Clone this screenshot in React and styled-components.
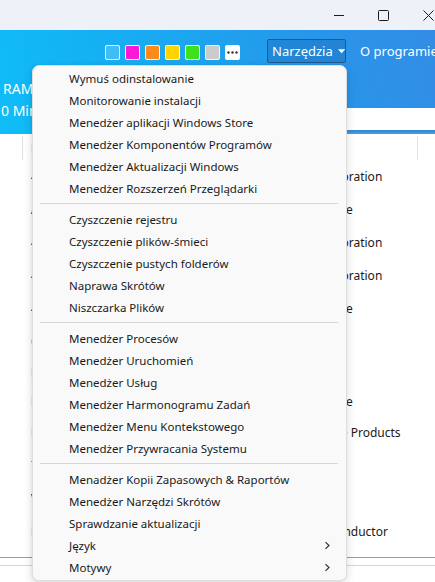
import React from "react";
import styled, { createGlobalStyle } from "styled-components";

const Global = createGlobalStyle`
  html, body { margin: 0; padding: 0; overflow: hidden; background: #ffffff; }
  body { font-family: "Noto Sans", "Open Sans", sans-serif; }
  * { box-sizing: border-box; }
`;

const FONT = `"Noto Sans", "Open Sans", sans-serif`;

const Frame = styled.div`
  position: relative;
  width: 451px;
  height: 582px;
  overflow: hidden;
  display: flex;
  flex-direction: column;
  background: #fff;
  font-family: ${FONT};
`;

const TitleBar = styled.div`
  height: 30px;
  flex: none;
  background: #eef1f8;
  display: flex;
  justify-content: flex-end;
`;

const Caption = styled.div`
  width: 45px;
  height: 30px;
  display: flex;
  align-items: center;
  justify-content: center;
  color: #1b1b1b;
`;

const Header = styled.div`
  flex: none;
  background: linear-gradient(75deg, #0fbdf7 0%, #18abf1 35%, #2796ea 70%, #348be4 100%);
  display: flex;
  flex-direction: column;
`;

const Toolbar = styled.div`
  height: 42px;
  display: flex;
  align-items: center;
  padding-left: 105px;
`;

const Swatches = styled.div`
  display: flex;
  gap: 5px;
  padding-top: 2px;
`;

const Swatch = styled.div`
  width: 15px;
  height: 15px;
  border-radius: 2px;
  border: 1.5px solid rgba(255, 255, 255, 0.9);
  background: ${(p) => p.$color};
  display: flex;
  align-items: center;
  justify-content: center;
`;

const MenuButton = styled.div`
  margin-left: 27px;
  width: 79px;
  height: 24px;
  border: 1px solid #1e5a8f;
  border-radius: 2px;
  background: rgba(25, 90, 160, 0.28);
  color: #fff;
  font-size: 13px;
  display: flex;
  align-items: center;
  padding-left: 4px;
  gap: 5px;
`;

const NavLink = styled.div`
  margin-left: 14px;
  color: #fff;
  font-size: 13px;
  white-space: nowrap;
`;

const InfoRow = styled.div`
  height: 62px;
  display: grid;
  grid-template-columns: 260px 1fr;
`;

const Stats = styled.div`
  color: #fff;
  font-size: 14px;
  line-height: 22px;
  padding: 6px 0 0 1px;
  white-space: nowrap;
`;

const StatLine = styled.div`
  padding-left: ${(p) => p.$indent || 0}px;
`;

const InfoRight = styled.div`
  display: flex;
  flex-direction: column;
`;

const BlueFill = styled.div`
  height: 36px;
`;

const WhiteBand = styled.div`
  height: 22px;
  background: #fff;
`;

const AccentLine = styled.div`
  height: 4px;
  background: linear-gradient(#2f86d2, #4a9ee0);
`;

const Table = styled.div`
  flex: none;
  display: flex;
  flex-direction: column;
  font-size: 12px;
  color: #1a1a1a;
`;

const Cols = `22px 230px 165px 1fr`;

const HeadRow = styled.div`
  height: 26px;
  display: grid;
  grid-template-columns: ${Cols};
  align-items: center;
`;

const HeadCell = styled.div`
  height: 24px;
  margin-top: 2px;
  display: flex;
  align-items: center;
  padding-left: 8px;
  border-left: ${(p) => (p.$divider ? "1px solid #e1e1e1" : "none")};
  color: ${(p) => p.$color || "#333"};
  white-space: nowrap;
  overflow: hidden;
`;

const Body = styled.div`
  height: 398px;
  overflow: hidden;
  border-bottom: 1px solid #9c9c9c;
`;

const Row = styled.div`
  height: ${(p) => p.$h}px;
  display: grid;
  grid-template-columns: ${Cols};
  align-items: center;
`;

const Cell = styled.div`
  padding-left: ${(p) => p.$pad ?? 6}px;
  white-space: nowrap;
  overflow: hidden;
`;

const StatusBar = styled.div`
  margin-top: 7px;
  border-top: 1px solid #d6d6d6;
  flex: 1;
`;

const Menu = styled.div`
  position: absolute;
  left: 32px;
  top: 65px;
  width: 315px;
  height: 516px;
  background: #f9f9f9;
  border: 1px solid #dedede;
  border-radius: 7px;
  box-shadow: 0 3px 10px rgba(0, 0, 0, 0.14), -1px 0 3px rgba(0, 0, 0, 0.05);
  padding-top: 1px;
  font-size: 11.5px;
  color: #1a1a1a;
`;

const Item = styled.div`
  height: 22px;
  display: flex;
  align-items: center;
  justify-content: space-between;
  padding: 0 15px 0 36px;
  white-space: nowrap;
`;

const Separator = styled.div`
  height: 9px;
  display: flex;
  align-items: center;
  padding: 0 8px 0 7px;
  &::after {
    content: "";
    flex: 1;
    height: 1px;
    background: #d6d6d6;
  }
`;

const Chevron = () => (
  <svg width="8" height="9" viewBox="0 0 8 9">
    <path d="M2.5 1.2 L6 4.5 L2.5 7.8" fill="none" stroke="#2a2a2a" strokeWidth="1.1" />
  </svg>
);

const menuGroups = [
  [
    "Wymuś odinstalowanie",
    "Monitorowanie instalacji",
    "Menedżer aplikacji Windows Store",
    "Menedżer Komponentów Programów",
    "Menedżer Aktualizacji Windows",
    "Menedżer Rozszerzeń Przeglądarki",
  ],
  [
    "Czyszczenie rejestru",
    "Czyszczenie plików-śmieci",
    "Czyszczenie pustych folderów",
    "Naprawa Skrótów",
    "Niszczarka Plików",
  ],
  [
    "Menedżer Procesów",
    "Menedżer Uruchomień",
    "Menedżer Usług",
    "Menedżer Harmonogramu Zadań",
    "Menedżer Menu Kontekstowego",
    "Menedżer Przywracania Systemu",
  ],
  [
    "Menadżer Kopii Zapasowych & Raportów",
    "Menedżer Narzędzi Skrótów",
    "Sprawdzanie aktualizacji",
    { label: "Język", sub: true },
    { label: "Motywy", sub: true },
  ],
];

const rows = [
  { h: 33, name: "4K Video Downloader", pub: "Microsoft Corporation" },
  { h: 33, name: "Adobe Acrobat Reader", pub: "Acronis Software" },
  { h: 33, name: "4K Stogram", pub: "Microsoft Corporation" },
  { h: 33, name: "4K YouTube to MP3", pub: "Microsoft Corporation" },
  { h: 33, name: "4K Slideshow Maker", pub: "Acronis Software" },
  { h: 33, name: "Google Chrome", pub: "Google LLC" },
  { h: 29, name: "Mozilla Firefox", pub: "Mozilla" },
  { h: 29, name: "Notepad++", pub: "Acronis Software" },
  { h: 33, name: "Microsoft Office", pub: "Microsoft Office Products" },
  { h: 33, name: "7-Zip", pub: "Igor Pavlov" },
  { h: 33, name: "VLC media player", pub: "VideoLAN" },
  { h: 33, name: "Realtek Audio Driver", pub: "Realtek Semiconductor" },
  { h: 33, name: "Steam", pub: "Valve" },
];

const swatchColors = ["#3fbdf4", "#ff17d8", "#ff8a1c", "#ffd400", "#3fe01e", "#cbcbcb"];

export default function App() {
  return (
    <>
      <Global />
      <Frame>
        <TitleBar>
          <Caption>
            <svg width="10" height="10" viewBox="0 0 10 10">
              <path d="M0 5.5 H10" stroke="#1b1b1b" strokeWidth="1" />
            </svg>
          </Caption>
          <Caption>
            <svg width="11" height="11" viewBox="0 0 11 11">
              <rect x="0.5" y="0.5" width="10" height="10" rx="1" fill="none" stroke="#1b1b1b" strokeWidth="1" />
            </svg>
          </Caption>
          <Caption>
            <svg width="11" height="11" viewBox="0 0 11 11">
              <path d="M0.5 0.5 L10.5 10.5 M10.5 0.5 L0.5 10.5" stroke="#1b1b1b" strokeWidth="1" />
            </svg>
          </Caption>
        </TitleBar>

        <Header>
          <Toolbar>
            <Swatches>
              {swatchColors.map((c) => (
                <Swatch key={c} $color={c} />
              ))}
              <Swatch $color="#ffffff">
                <svg width="11" height="3" viewBox="0 0 11 3">
                  <circle cx="1.5" cy="1.5" r="1.2" fill="#333" />
                  <circle cx="5.5" cy="1.5" r="1.2" fill="#333" />
                  <circle cx="9.5" cy="1.5" r="1.2" fill="#333" />
                </svg>
              </Swatch>
            </Swatches>
            <MenuButton>
              Narzędzia
              <svg width="8" height="5" viewBox="0 0 8 5">
                <path d="M0 0 H8 L4 4.5 Z" fill="#fff" />
              </svg>
            </MenuButton>
            <NavLink>O programie</NavLink>
          </Toolbar>
          <InfoRow>
            <Stats>
              <StatLine $indent={2}>RAM: 4.2 GB / 16 GB</StatLine>
              <StatLine>0 Minut od ostatniego skanu</StatLine>
            </Stats>
            <InfoRight>
              <BlueFill />
              <WhiteBand />
              <AccentLine />
            </InfoRight>
          </InfoRow>
        </Header>

        <Table>
          <HeadRow>
            <HeadCell />
            <HeadCell $divider $color="#8d1b1b">Nazwa programu</HeadCell>
            <HeadCell>Wydawca</HeadCell>
            <HeadCell $divider />
          </HeadRow>
          <Body>
            {rows.map((r, i) => (
              <Row key={i} $h={r.h}>
                <Cell />
                <Cell $pad={9}>{r.name}</Cell>
                <Cell>{r.pub}</Cell>
                <Cell />
              </Row>
            ))}
          </Body>
          <StatusBar />
        </Table>

        <Menu>
          {menuGroups.map((g, gi) => (
            <React.Fragment key={gi}>
              {gi > 0 && <Separator />}
              {g.map((it) => {
                const label = typeof it === "string" ? it : it.label;
                const sub = typeof it !== "string" && it.sub;
                return (
                  <Item key={label}>
                    <span>{label}</span>
                    {sub && <Chevron />}
                  </Item>
                );
              })}
            </React.Fragment>
          ))}
        </Menu>
      </Frame>
    </>
  );
}
